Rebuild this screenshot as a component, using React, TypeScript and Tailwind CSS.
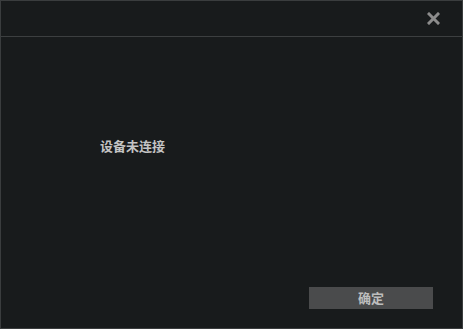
import React from 'react';

const App: React.FC = () => {
  return (
    <div className="w-[463px] h-[329px] bg-[#181b1c] border border-[#3a3d3e] flex flex-col font-['Noto_Sans_CJK_SC',sans-serif]">
      {/* Header */}
      <div className="h-[36px] shrink-0 border-b border-[#3c3f40] flex items-center justify-end pr-[22px]">
        <svg width="13" height="13" viewBox="0 0 13 13" className="mt-[-1px]">
          <path d="M2 2 L11 11 M11 2 L2 11" stroke="#8c8c8c" strokeWidth="3" strokeLinecap="square" />
        </svg>
      </div>

      {/* Body */}
      <div className="flex-1 flex flex-col">
        <p className="ml-[99px] mt-[102px] text-[13px] leading-[14px] font-bold text-[#c4c4c4]">
          设备未连接
        </p>
        <div className="mt-auto mb-[19px] flex justify-end pr-[29px]">
          <button className="w-[124px] h-[22px] bg-[#4a4b4c] text-[13px] leading-[22px] font-bold text-[#bdbdbd]">
            确定
          </button>
        </div>
      </div>
    </div>
  );
};

export default App;
